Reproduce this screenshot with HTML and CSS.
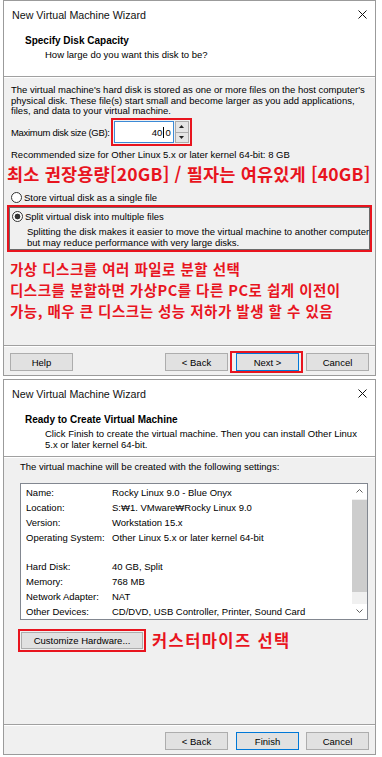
FILE: index.html
```html
<!DOCTYPE html>
<html lang="ko">
<head>
  <meta charset="UTF-8" />
  <meta name="viewport" content="width=device-width, initial-scale=1.0"/>
  <title>New Virtual Machine Wizard</title>
  <link rel="stylesheet" href="styles.css">
</head>
<body>

  <!-- step: disk capacity -->
  <div class="window">
    <div class="titlebar">
      <span class="title">New Virtual Machine Wizard</span>
      <svg class="close" width="9" height="9" viewBox="0 0 9 9"><path d="M0.5 0.5L8.5 8.5M8.5 0.5L0.5 8.5" stroke="#111" stroke-width="1" fill="none"/></svg>
    </div>
    <div class="header">
      <h1>Specify Disk Capacity</h1>
      <p>How large do you want this disk to be?</p>
    </div>

    <div class="body disk-body">
      <p class="text">The virtual machine's hard disk is stored as one or more files on the host computer's<br>physical disk. These file(s) start small and become larger as you add applications,<br>files, and data to your virtual machine.</p>

      <div class="size-row">
        <span class="size-label">Maximum disk size (GB):</span>
        <div class="mark spin-mark">
          <div class="spin-field">40<span class="caret"></span>0</div>
          <div class="spin-btns">
            <span class="spin-btn"><svg width="5" height="3" viewBox="0 0 5 3"><path d="M2.5 0L5 3H0Z" fill="#222"/></svg></span>
            <span class="spin-btn"><svg width="5" height="3" viewBox="0 0 5 3"><path d="M0 0H5L2.5 3Z" fill="#222"/></svg></span>
          </div>
        </div>
      </div>

      <p class="text recommend">Recommended size for Other Linux 5.x or later kernel 64-bit: 8 GB</p>
      <p class="note note-big">최소 권장용량[20GB] / 필자는 여유있게 [40GB]</p>

      <div class="radio"><span class="dot"></span>Store virtual disk as a single file</div>
      <div class="mark split-mark">
        <div class="split-inner">
          <div class="radio"><span class="dot checked"></span>Split virtual disk into multiple files</div>
          <p class="text desc">Splitting the disk makes it easier to move the virtual machine to another computer<br>but may reduce performance with very large disks.</p>
        </div>
      </div>

      <p class="note note-list">가상 디스크를 여러 파일로 분할 선택<br>디스크를 분할하면 가상PC를 다른 PC로 쉽게 이전이<br>가능, 매우 큰 디스크는 성능 저하가 발생 할 수 있음</p>
    </div>

    <div class="footer">
      <button class="btn">Help</button>
      <button class="btn push">&lt; Back</button>
      <span class="btn-mark"><button class="btn default">Next &gt;</button></span>
      <button class="btn">Cancel</button>
    </div>
  </div>

  <!-- step: ready to create -->
  <div class="window">
    <div class="titlebar">
      <span class="title">New Virtual Machine Wizard</span>
      <svg class="close" width="9" height="9" viewBox="0 0 9 9"><path d="M0.5 0.5L8.5 8.5M8.5 0.5L0.5 8.5" stroke="#111" stroke-width="1" fill="none"/></svg>
    </div>
    <div class="header">
      <h1>Ready to Create Virtual Machine</h1>
      <p>Click Finish to create the virtual machine. Then you can install Other Linux<br>5.x or later kernel 64-bit.</p>
    </div>

    <div class="body ready-body">
      <p class="text intro">The virtual machine will be created with the following settings:</p>

      <div class="settings">
        <div class="settings-list">
          <span>Name:</span><span>Rocky Linux 9.0 - Blue Onyx</span>
          <span>Location:</span><span>S:₩1. VMware₩Rocky Linux 9.0</span>
          <span>Version:</span><span>Workstation 15.x</span>
          <span>Operating System:</span><span>Other Linux 5.x or later kernel 64-bit</span>
          <span></span><span></span>
          <span>Hard Disk:</span><span>40 GB, Split</span>
          <span>Memory:</span><span>768 MB</span>
          <span>Network Adapter:</span><span>NAT</span>
          <span>Other Devices:</span><span>CD/DVD, USB Controller, Printer, Sound Card</span>
        </div>
        <div class="scrollbar">
          <span class="scroll-arrow"><svg width="7" height="4" viewBox="0 0 7 4"><path d="M0.5 3.5L3.5 0.5L6.5 3.5" stroke="#606060" fill="none"/></svg></span>
          <span class="scroll-track"><span class="thumb"></span></span>
          <span class="scroll-arrow"><svg width="7" height="4" viewBox="0 0 7 4"><path d="M0.5 0.5L3.5 3.5L6.5 0.5" stroke="#606060" fill="none"/></svg></span>
        </div>
      </div>

      <div class="customize-row">
        <span class="mark custom-mark"><button class="btn wide">Customize Hardware...</button></span>
        <span class="note note-mid">커스터마이즈 선택</span>
      </div>
    </div>

    <div class="footer">
      <button class="btn push">&lt; Back</button>
      <button class="btn default finish">Finish</button>
      <button class="btn">Cancel</button>
    </div>
  </div>

</body>
</html>
```

FILE: styles.css
```css
:root {
  --face: #f0f0f0;
  --line: #a0a0a0;
  --btn: #e1e1e1;
  --btn-border: #adadad;
  --focus: #0078d7;
  --mark: #e8141e;
}

* {
  box-sizing: border-box;
  margin: 0;
  padding: 0;
}

body {
  background: #fff;
  color: #000;
  font-family: 'Liberation Sans', 'Noto Sans CJK KR', sans-serif;
  font-size: 9.5px;
  width: 382px;
  height: 757px;
  overflow: hidden;
}

.window {
  width: 373px;
  margin-left: 3px;
  border: 1px solid #9b9b9b;
  background: var(--face);
}

.window + .window {
  margin-top: 3px;
}

.titlebar {
  height: 27px;
  background: #fff;
  display: flex;
  align-items: center;
  justify-content: space-between;
  padding: 0 8px;
}

.title {
  font-size: 10.7px;
  color: #111;
}

.header {
  background: #fff;
  min-height: 49px;
  padding: 7px 0 6px 21px;
  border-bottom: 1px solid var(--line);
}

.header h1 {
  font-size: 10px;
  font-weight: bold;
  line-height: 12px;
}

.header p {
  margin-top: 3px;
  padding-left: 20px;
  line-height: 10.5px;
}

.body {
  border-top: 1px solid #fff;
  display: flex;
  flex-direction: column;
  align-items: flex-start;
}

.disk-body {
  height: 268px;
  padding: 7px 7px 0 7px;
}

.ready-body {
  height: 267px;
  padding: 3.5px 8px 0 16px;
}

.text {
  line-height: 10.5px;
  white-space: nowrap;
}

/* red annotation boxes */
.mark {
  border: 2px solid var(--mark);
}

.note {
  color: var(--mark);
  font-family: 'Noto Sans CJK KR', sans-serif;
  font-weight: 700;
  white-space: nowrap;
}

.note-big {
  font-size: 17.5px;
  line-height: 20px;
  letter-spacing: 0.2px;
  margin: 4.5px 0 0 -4px;
}

.note-list {
  font-size: 14.5px;
  line-height: 21px;
  letter-spacing: 0.5px;
  margin: 5.5px 0 0 -1px;
}

.note-mid {
  font-size: 16.5px;
  line-height: 20px;
  letter-spacing: 1.4px;
  margin-left: 6px;
}

.size-row {
  margin-top: 1.5px;
  display: flex;
  align-items: center;
}

.size-label {
  letter-spacing: -0.3px;
}

.spin-mark {
  display: flex;
  gap: 1px;
  padding: 1px;
  margin-left: 1px;
}

.spin-field {
  width: 60px;
  height: 22px;
  background: #fff;
  border: 1px solid #3c8ad6;
  display: flex;
  align-items: center;
  justify-content: flex-end;
  padding-right: 2px;
}

.caret {
  width: 1px;
  height: 11px;
  background: #000;
  margin: 0 1px;
}

.spin-btns {
  width: 14px;
  display: flex;
  flex-direction: column;
}

.spin-btn {
  flex: 1;
  background: #e5e5e5;
  border: 1px solid #acacac;
  display: flex;
  align-items: center;
  justify-content: center;
}

.spin-btn + .spin-btn {
  border-top: none;
}

.recommend {
  margin-top: 2.5px;
  line-height: 11px;
}

.radio {
  display: flex;
  align-items: center;
  gap: 2px;
  height: 12px;
  margin-top: 7px;
}

.dot {
  width: 11px;
  height: 11px;
  border: 1px solid #333;
  border-radius: 50%;
  background: #fff;
}

.dot.checked {
  background: radial-gradient(circle, #333 2.6px, #fff 3.2px);
}

.split-mark {
  align-self: stretch;
  margin: 2px -4px 0 -4px;
}

.split-inner {
  border: 1px solid #6a6a6a;
  padding: 0 0 1px 2px;
}

.split-inner .radio {
  margin-top: 2px;
}

.desc {
  margin-top: 5px;
  padding-left: 15px;
}

/* settings summary */
.settings {
  align-self: stretch;
  margin-top: 10.5px;
  margin-right: -1px;
  background: #fff;
  border: 1px solid #828790;
  display: flex;
}

.settings-list {
  flex: 1;
  padding: 2px 0 0 5px;
  display: grid;
  grid-template-columns: 86px auto;
  grid-auto-rows: 14.8px;
  align-items: center;
}

.scrollbar {
  width: 15px;
  background: var(--face);
  display: flex;
  flex-direction: column;
}

.scroll-arrow {
  height: 15px;
  display: flex;
  align-items: center;
  justify-content: center;
  background: #fff;
}

.scroll-track {
  flex: 1;
  padding-top: 1px;
}

.thumb {
  display: block;
  height: 92px;
  background: #cdcdcd;
}

.customize-row {
  margin-top: 9px;
  margin-left: -2px;
  display: flex;
  align-items: center;
}

.custom-mark {
  padding: 1px;
}

/* buttons */
.btn {
  width: 63px;
  height: 18px;
  background: var(--btn);
  border: 1px solid var(--btn-border);
  font-family: 'Liberation Sans', sans-serif;
  font-size: 9.5px;
  color: #000;
}

.btn.default {
  border-color: var(--focus);
}

.btn.wide {
  width: 122px;
  height: 17px;
  display: block;
}

.footer {
  height: 30px;
  border-top: 1px solid var(--line);
  box-shadow: inset 0 1px #fff;
  padding: 7px 6px 0 6px;
  display: flex;
  align-items: flex-start;
  gap: 7px;
}

.push {
  margin-left: auto;
}

.btn-mark {
  position: relative;
  margin-left: 1px;
  display: flex;
}

.btn-mark::after {
  content: "";
  position: absolute;
  top: -2px;
  bottom: -2px;
  left: -6px;
  right: -4px;
  border: 2px solid var(--mark);
}

.finish {
  margin-left: 1px;
}
```
